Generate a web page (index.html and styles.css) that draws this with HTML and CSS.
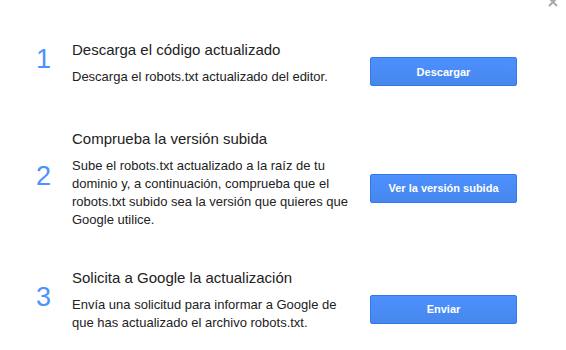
FILE: index.html
```html
<!DOCTYPE html>
<html lang="es">
<head>
<meta charset="utf-8">
<link rel="stylesheet" href="styles.css">
</head>
<body>
<div class="dialog">
  <button class="close" aria-label="Cerrar">
    <svg width="10" height="10" viewBox="0 0 10 10"><path d="M1 1L9 9M9 1L1 9" stroke="#a8a8a8" stroke-width="2" fill="none"/></svg>
  </button>
  <div class="steps">
    <div class="step step1">
      <div class="num">1</div>
      <div class="content">
        <div class="title">Descarga el código actualizado</div>
        <div class="desc">Descarga el robots.txt actualizado del editor.</div>
      </div>
      <div class="action"><button class="btn">Descargar</button></div>
    </div>
    <div class="step step2">
      <div class="num">2</div>
      <div class="content">
        <div class="title">Comprueba la versión subida</div>
        <div class="desc">Sube el robots.txt actualizado a la raíz de tu dominio y, a continuación, comprueba que el robots.txt subido sea la versión que quieres que Google utilice.</div>
      </div>
      <div class="action"><button class="btn">Ver la versión subida</button></div>
    </div>
    <div class="step step3">
      <div class="num">3</div>
      <div class="content">
        <div class="title">Solicita a Google la actualización</div>
        <div class="desc">Envía una solicitud para informar a Google de que has actualizado el archivo robots.txt.</div>
      </div>
      <div class="action"><button class="btn">Enviar</button></div>
    </div>
  </div>
</div>
</body>
</html>
```
FILE: styles.css
```css
html, body {
  margin: 0;
  padding: 0;
  background: #fff;
}
body {
  font-family: Arial, "Liberation Sans", sans-serif;
  color: #222;
}
.dialog {
  position: relative;
  width: 566px;
  height: 350px;
  overflow: hidden;
}
.close {
  position: absolute;
  top: -3px;
  left: 548px;
  width: 10px;
  height: 10px;
  padding: 0;
  border: 0;
  background: none;
  line-height: 0;
}
.steps {
  display: flex;
  flex-direction: column;
  padding: 39px 0 0 36px;
}
.step {
  display: flex;
  align-items: center;
}
.step2 {
  margin-top: 43px;
}
.step3 {
  margin-top: 39px;
}
.num {
  width: 36px;
  font-size: 27px;
  line-height: 31px;
  color: #4d90fe;
  padding-bottom: 6px;
}
.content {
  width: 280px;
}
.title {
  font-size: 15px;
  line-height: 20px;
  margin-bottom: 8px;
}
.desc {
  font-size: 13px;
  line-height: 18px;
}
.action {
  margin-left: 18px;
  padding-top: 18px;
}
.btn {
  display: block;
  width: 147px;
  height: 29px;
  padding: 0;
  border: 1px solid #3079ed;
  border-radius: 2px;
  background: linear-gradient(#4d90fe, #4787ed);
  color: #fff;
  font-family: Arial, "Liberation Sans", sans-serif;
  font-size: 11px;
  font-weight: bold;
}
```
